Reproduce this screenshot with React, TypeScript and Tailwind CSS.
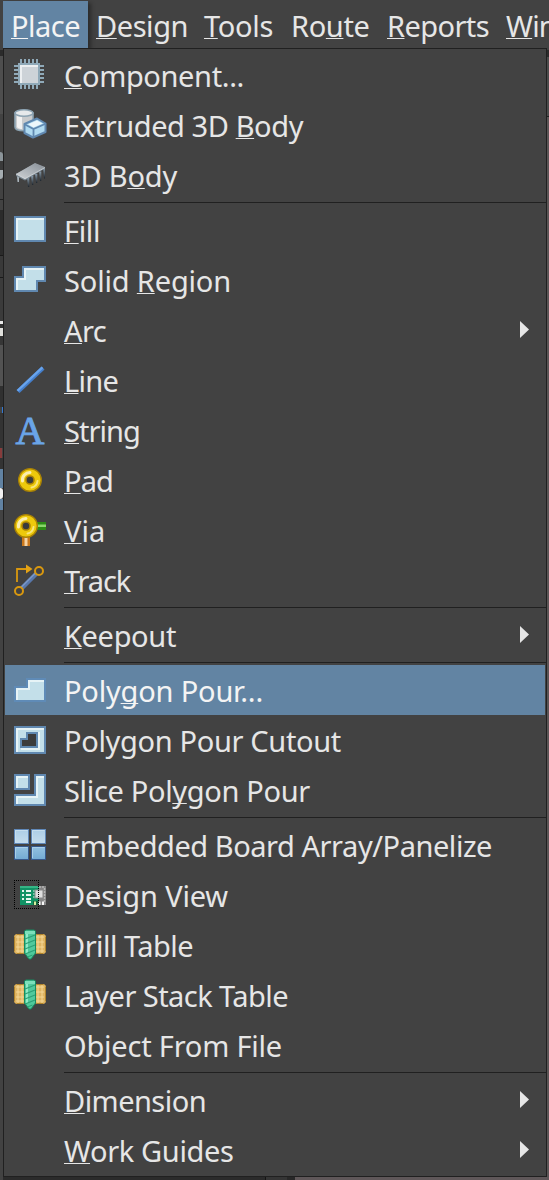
import { useLayoutEffect, useRef, useState, type ReactNode } from "react";

type LabelProps = { text: string; width: number; mnemonic?: number };

/** Menu caption with an underlined access key, tracked to its column width. */
function Label({ text, width, mnemonic }: LabelProps) {
  const ref = useRef<HTMLSpanElement>(null);
  const [spacing, setSpacing] = useState(0);
  useLayoutEffect(() => {
    if (ref.current) setSpacing((width - ref.current.getBoundingClientRect().width) / text.length);
  }, [text, width]);
  const key = mnemonic ?? -1;
  return (
    <span
      ref={ref}
      className="inline-block whitespace-pre font-['Noto_Sans',sans-serif] text-[29px] leading-[40px] font-[370]"
      style={{ letterSpacing: `${spacing}px` }}
    >
      {key < 0 ? (
        text
      ) : (
        <>
          {text.slice(0, key)}
          <span className="underline decoration-1 underline-offset-[1px] [text-decoration-skip-ink:none]">{text[key]}</span>
          {text.slice(key + 1)}
        </>
      )}
    </span>
  );
}

function Icon({ children }: { children?: ReactNode }) {
  return (
    <svg viewBox="0 0 32 32" className="size-8 shrink-0 overflow-visible">
      {children}
    </svg>
  );
}

const edge = "#6088b0";
const pale = "#c3dfe9";
const shine = "#e6f3f6";

function ComponentIcon() {
  return (
    <Icon>
      {[6, 10, 14, 18, 22].map((p) => (
        <g key={p} fill="#8fa9b8">
          <rect x={p} y="0" width="2" height="30" />
          <rect x="0" y={p} width="30" height="2" />
        </g>
      ))}
      <rect x="4" y="4" width="22" height="22" fill="#8fa9b8" />
      <rect x="6" y="6" width="18" height="18" fill="#cdd3d8" />
      <path d="M6 24V6h18v2H8v16z" fill="#eceff1" />
    </Icon>
  );
}

function ExtrudedIcon() {
  return (
    <Icon>
      <path d="M1 4v14c0 5 18 5 18 0V4z" fill="#c9cbcd" stroke="#8ca3b2" strokeWidth="1.6" />
      <path d="M3 7v11c1 1.500 3 2 5 2V8z" fill="#f0f0f0" />
      <ellipse cx="10" cy="4" rx="9" ry="3.300" fill="#e6e9eb" stroke="#8ca3b2" strokeWidth="1.600" />
      <path d="M10.500 15 23 9.500 31.500 14.500V23L19 28.500 10.500 24z" fill="#b0daf1" stroke={edge} strokeWidth="2" strokeLinejoin="round" />
      <path d="M14 15.300 23 11.500l5.500 3-9 4z" fill="#edf7fb" />
      <path d="M11 15.500 19.500 20 31 15M19.500 20v8" fill="none" stroke={edge} strokeWidth="1.800" />
    </Icon>
  );
}

function ChipIcon() {
  return (
    <Icon>
      <defs>
        <linearGradient id="chipTop" x1="0" y1="1" x2="1" y2="0">
          <stop offset="0" stopColor="#d0d3d6" />
          <stop offset="0.500" stopColor="#abb1b7" />
          <stop offset="1" stopColor="#858c94" />
        </linearGradient>
        <linearGradient id="chipLeg" x1="0" y1="0" x2="0" y2="1">
          <stop offset="0" stopColor="#8799a8" />
          <stop offset="1" stopColor="#1e262e" />
        </linearGradient>
      </defs>
      <path d="M3 17h2v6H3.500z" fill="#a9b4bc" />
      <path d="M13 19h2.300v9H14z" fill="url(#chipLeg)" />
      <path d="M17 17h2.300v9H18z" fill="url(#chipLeg)" />
      <path d="M21 15h2.300v9H22z" fill="url(#chipLeg)" />
      <path d="M25 12.500h2.300v9.500H26z" fill="url(#chipLeg)" />
      <path d="M29 9h2v10.500H30z" fill="url(#chipLeg)" />
      <path d="M2 15 21 4.500 31 8.500V9.500L11 21.500 2 17z" fill="#7a8792" />
      <path d="M2 15 21 4 31 8 11 20z" fill="url(#chipTop)" />
      <path d="M2 15 11 19.700 31 8.500" fill="none" stroke="#d5d9dc" strokeWidth="0.800" />
    </Icon>
  );
}

function FillIcon() {
  return (
    <Icon>
      <rect x="0" y="2" width="32" height="26" fill={edge} />
      <rect x="2" y="4" width="28" height="22" fill={pale} />
      <path d="M2 26V4h28v2H4v20z" fill={shine} />
    </Icon>
  );
}

function SolidIcon() {
  return (
    <Icon>
      <path d="M8 2h24v16h-8v10H0V12h8z" fill={edge} />
      <path d="M10 4h20v12h-8v10H2V14h8z" fill={pale} />
      <path d="M10 4h20v2H12v10H4v10H2V14h8z" fill={shine} />
    </Icon>
  );
}

function LineIcon() {
  return (
    <Icon>
      <path d="M4 27.500 29 4" stroke="#457fcb" strokeWidth="4.400" />
      <path d="M3.500 26.800 28.500 3.400" stroke="#69a4ec" strokeWidth="2.200" />
    </Icon>
  );
}

function StringIcon() {
  return (
    <Icon>
      <text
        x="16"
        y="29.500"
        textAnchor="middle"
        fill="#6aa5e8"
        stroke="#6aa5e8"
        strokeWidth="0.900"
        className="font-['Liberation_Serif',serif] text-[40px]"
      >
        A
      </text>
    </Icon>
  );
}

function Ring({ cx, cy }: { cx: number; cy: number }) {
  return (
    <>
      <circle cx={cx} cy={cy} r="11.300" fill="#edc90c" stroke="#a98205" strokeWidth="1.400" />
      <path d={`M${cx - 7.5} ${cy + 1}a7.500 7.500 0 0 1 7.500-8.500`} fill="none" stroke="#fbeeb0" strokeWidth="3" strokeLinecap="round" />
      <path d={`M${cx + 7.5} ${cy + 1}a7.500 7.500 0 0 1-6 6.500`} fill="none" stroke="#f8e67e" strokeWidth="2" strokeLinecap="round" />
      <circle cx={cx} cy={cy} r="4" fill="#393b3d" stroke="#a98205" strokeWidth="1.600" />
    </>
  );
}

function PadIcon() {
  return (
    <Icon>
      <Ring cx={16} cy={16} />
    </Icon>
  );
}

function ViaIcon() {
  return (
    <Icon>
      <rect x="22" y="8" width="10" height="8" fill="#2d8c16" />
      <rect x="22" y="10.500" width="10" height="2.500" fill="#8ad66b" />
      <rect x="8" y="22" width="8" height="10" fill="#c9771c" />
      <rect x="10.500" y="22" width="3" height="10" fill="#f6d3a4" />
      <Ring cx={12} cy={12} />
    </Icon>
  );
}

function TrackIcon() {
  return (
    <Icon>
      <path d="M7.500 24.500 22.500 9.500" stroke="#5877aa" strokeWidth="4.500" />
      <path d="M7 23.500 21.500 9" stroke="#7a98c6" strokeWidth="1.500" />
      <path d="M3 18V5h10" fill="none" stroke="#d9980f" strokeWidth="1.800" />
      <path d="M12 .5 18.500 5 12 9.500z" fill="#e3a215" />
      <circle cx="5" cy="27" r="4" fill="#424242" stroke="#d9980f" strokeWidth="2" />
      <circle cx="25" cy="7" r="4" fill="#424242" stroke="#d9980f" strokeWidth="2" />
    </Icon>
  );
}

function PolygonIcon() {
  return (
    <Icon>
      <path d="M12 4h20v24H0V12h12z" fill="#5f8bb7" />
      <path d="M14 6h16v20H2V14h12z" fill={pale} />
      <path d="M14 6h16v2H16v8H4v10H2V14h12z" fill={shine} />
    </Icon>
  );
}

function CutoutIcon() {
  return (
    <Icon>
      <rect x="0" y="2" width="32" height="28" fill={edge} />
      <rect x="2" y="4" width="28" height="24" fill={pale} />
      <path d="M2 28V4h28v2H4v22zM24 8h2v18H7v-2h17z" fill={shine} />
      <path d="M12 8h12v16H6V14h6z" fill={edge} />
      <path d="M14 10h8v12H8v-6h6z" fill="#3c3c3c" />
    </Icon>
  );
}

function SliceIcon() {
  return (
    <Icon>
      <path d="M0 0h16v16H0zM20 0h12v32H0V20h20z" fill={edge} />
      <path d="M2 2h12v12H2zM22 2h8v28H2v-8h20z" fill={pale} />
      <path d="M2 14V2h12v2H4v10zM22 2h8v2h-6v20H4v6H2v-8h20z" fill={shine} />
    </Icon>
  );
}

function ArrayIcon() {
  return (
    <Icon>
      <defs>
        <linearGradient id="boardTop" x1="0" y1="0" x2="0" y2="1">
          <stop offset="0" stopColor="#accee6" />
          <stop offset="1" stopColor="#c4dcec" />
        </linearGradient>
        <linearGradient id="boardBottom" x1="0" y1="0" x2="0" y2="1">
          <stop offset="0" stopColor="#93c1e0" />
          <stop offset="1" stopColor="#73abd3" />
        </linearGradient>
      </defs>
      {[0.5, 17.5].map((x) => (
        <g key={x}>
          <rect x={x} y="0.500" width="14" height="14" fill="url(#boardTop)" stroke="#6088b8" />
          <rect x={x} y="17.500" width="14" height="13" fill="url(#boardBottom)" stroke="#37598c" />
          <path d={`M${x + 1} 13V1.500h12`} fill="none" stroke="#c6deee" />
          <path d={`M${x + 1} 29V18.500h12`} fill="none" stroke="#a9cfe8" />
        </g>
      ))}
    </Icon>
  );
}

function ViewIcon() {
  return (
    <Icon>
      <rect x="6" y="7" width="19" height="19" fill="#119365" />
      <rect x="6" y="7" width="19" height="2" fill="#35b585" />
      <rect x="25" y="7" width="7" height="19" fill="#858585" />
      <path d="M25 8h6M30.500 9v14" stroke="#b5b5b5" strokeWidth="1.500" strokeDasharray="2 1" />
      <path d="M8 11h2v2H8zm0 4h2v2H8zm0 4h2v2H8zM12 11h5v2h-5zm0 4h5v2h-5zm0 4h5v2h-5zm0 3h5v2h-5z" fill="#e4f5ed" />
      <rect x="21" y="11" width="8" height="8" fill="#dedede" stroke="#888" />
      <path d="M19 12h1.500m-1.500 3h1.500m-1.500 3h1.500" stroke="#d8efe5" />
      <rect x="19" y="22" width="6" height="4" fill="#13673d" />
      <path d="M20 22.500h2V26h-2z" fill="#d6efa0" />
      <path d="M24.500 22.500h2V26h-2zm3.500 0h2V26h-2z" fill="#f6f6f6" />
      <path
        d="M0 1.500h25M0 29.500h25M0.500 1v29M24.500 1v29"
        fill="none"
        stroke="#000"
        strokeDasharray="1 1"
        shapeRendering="crispEdges"
      />
    </Icon>
  );
}

function DrillIcon() {
  return (
    <Icon>
      <path d="M2 5h7l2 1v18l-2 1H2l-2-2V7zM23 5h7l2 2v16l-2 2h-7l-2-1V6z" fill="#dfb461" />
      <path d="M2 8h8m-8 5h8m-8 5h8m-8 4h8M4 6v18M8 6v18M22 8h8m-8 5h8m-8 5h8m-8 4h8M24 6v18M28 6v18" stroke="#f3d797" />
      <path d="M2.500 5.500h7M2.500 24.500h7M.5 7.500v15M22.500 5.500h7M22.500 24.500h7M31.500 7.500v15" stroke="#b0842c" />
      <path d="M10.500 2 12 1h8l1.500 1v22L17 30h-2l-4.500-6z" fill="#50c99c" stroke="#158c61" />
      <path d="M13 2v22" stroke="#92e9c7" strokeWidth="2" />
      <path d="M11 10 21 6M11 15l10-4M11 20l10-4M11 25l10-4M13.500 28l5-2" stroke="#2b9f74" strokeWidth="1.100" />
      <path d="M11 2h10v3H11z" fill="#7de0bb" />
    </Icon>
  );
}

type Entry = LabelProps & { icon?: ReactNode; submenu?: boolean; active?: boolean };

const groups: Entry[][] = [
  [
    { text: "Component...", width: 180, mnemonic: 0, icon: <ComponentIcon /> },
    { text: "Extruded 3D Body", width: 239, mnemonic: 12, icon: <ExtrudedIcon /> },
    { text: "3D Body", width: 113, mnemonic: 4, icon: <ChipIcon /> },
  ],
  [
    { text: "Fill", width: 36, mnemonic: 0, icon: <FillIcon /> },
    { text: "Solid Region", width: 167, mnemonic: 6, icon: <SolidIcon /> },
    { text: "Arc", width: 42, mnemonic: 0, submenu: true },
    { text: "Line", width: 54, mnemonic: 0, icon: <LineIcon /> },
    { text: "String", width: 76, mnemonic: 0, icon: <StringIcon /> },
    { text: "Pad", width: 49, mnemonic: 0, icon: <PadIcon /> },
    { text: "Via", width: 41.5, mnemonic: 0, icon: <ViaIcon /> },
    { text: "Track", width: 66, mnemonic: 0, icon: <TrackIcon /> },
  ],
  [{ text: "Keepout", width: 112, mnemonic: 0, submenu: true }],
  [
    { text: "Polygon Pour...", width: 199, mnemonic: 4, icon: <PolygonIcon />, active: true },
    { text: "Polygon Pour Cutout", width: 277, icon: <CutoutIcon /> },
    { text: "Slice Polygon Pour", width: 246, mnemonic: 9, icon: <SliceIcon /> },
  ],
  [
    { text: "Embedded Board Array/Panelize", width: 428, icon: <ArrayIcon /> },
    { text: "Design View", width: 164, icon: <ViewIcon /> },
    { text: "Drill Table", width: 129, icon: <DrillIcon /> },
    { text: "Layer Stack Table", width: 224, icon: <DrillIcon /> },
    { text: "Object From File", width: 218 },
  ],
  [
    { text: "Dimension", width: 142, mnemonic: 0, submenu: true },
    { text: "Work Guides", width: 169.5, mnemonic: 0, submenu: true },
  ],
];

function Row({ icon, submenu, active, ...label }: Entry) {
  return (
    <div className={active ? "mx-px flex h-[50px] items-start bg-[#6284a3] pl-[9px] text-[#f4f4f4]" : "mx-px flex h-[50px] items-start pl-[9px]"}>
      <div className="mt-[9px] mr-[18px] size-8 shrink-0">{icon}</div>
      <div className="mt-[6px] grow">
        <Label {...label} />
      </div>
      {submenu && (
        <svg viewBox="0 0 9 17" className="mt-4 mr-4 h-[17px] w-[9px] shrink-0">
          <path d="M0 0 9 8.500 0 17z" fill="#e6e6e6" />
        </svg>
      )}
    </div>
  );
}

const leftStrip: string[] = [
  "h-[50px] bg-[#424242]",
  "h-[6px] bg-[#2b2b2b]",
  "h-[58px] bg-[#4e4e4e]",
  "h-[38px] bg-[#424242]",
  "h-[9px] bg-[#8b9499] rounded-tr-full",
  "h-[9px] bg-[#3a3a3a]",
  "h-[9px] bg-[#a5adb1] rounded-br-full",
  "h-[20px] bg-[#424242]",
  "h-px bg-[#202020]",
  "h-[10px] bg-[#424242]",
  "h-[45px] bg-[#2b2b2b]",
  "h-px bg-[#1a1a1a]",
  "h-[21px] bg-[#393939]",
  "h-px bg-[#1a1a1a]",
  "h-[43px] bg-[#3b3b3b]",
  "h-[3px] bg-[#e8e8e8]",
  "h-[4px] bg-[#333333]",
  "h-[8px] bg-[#e0e0dc]",
  "h-[9px] bg-[#363636]",
  "h-[41px] bg-[#525252]",
  "h-[21px] bg-[#303030]",
  "h-[6px] w-px self-end bg-[#3478d0]",
  "h-[35px] bg-[#333333]",
  "h-[10px] w-[2px] bg-[#873c3c]",
  "h-[11px] bg-[#333333]",
  "h-[19px] bg-[#6182a2]",
  "h-[11px] rounded-r-full bg-[#f0f0f0]",
  "h-[11px] bg-[#6182a2]",
  "grow bg-[#424242]",
];

const menus: (LabelProps & { box: string })[] = [
  { text: "Place", width: 69, mnemonic: 0, box: "w-[85px] pl-2 mt-px h-[47px] pt-[5px] bg-[#6284a3] text-[#f4f4f4] shadow-[3px_2px_4px_rgba(0,0,0,0.35)]" },
  { text: "Design", width: 92, mnemonic: 0, box: "w-[108px] pl-2 pt-[6px]" },
  { text: "Tools", width: 69, mnemonic: 0, box: "w-[87px] pl-2 pt-[6px]" },
  { text: "Route", width: 78.5, mnemonic: 2, box: "w-[96px] pl-2 pt-[6px]" },
  { text: "Reports", width: 102, mnemonic: 0, box: "w-[119px] pl-2 pt-[6px]" },
  { text: "Window", width: 105, mnemonic: 0, box: "w-[120px] pl-2 pt-[6px]" },
];

export default function App() {
  return (
    <div className="flex h-[1180px] w-[549px] overflow-hidden bg-[#424242] text-[#e6e6e6]">
      <div className="flex w-[3px] shrink-0 flex-col">
        {leftStrip.map((c, i) => (
          <div key={i} className={c} />
        ))}
      </div>
      <div className="flex w-[546px] shrink-0 flex-col">
        <div className="flex h-12 w-full shrink-0 items-start overflow-hidden">
          {menus.map(({ box, ...m }) => (
            <div key={m.text} className={`shrink-0 ${box}`}>
              <Label {...m} />
            </div>
          ))}
        </div>
        <div className="flex h-[1129px] shrink-0">
          <div className="w-[544px] shrink-0 border border-[#202020] bg-[#424242] pt-px">
            {groups.map((rows, g) => (
              <div key={g}>
                {g > 0 && (
                  <div className="h-[5px] pt-[2px] pl-[60px]">
                    <div className="h-px bg-[#202020]" />
                  </div>
                )}
                {rows.map((r) => (
                  <Row key={r.text} {...r} />
                ))}
              </div>
            ))}
          </div>
          <div className="flex w-[2px] flex-col">
            <div className="h-[2px] bg-[#424242]" />
            <div className="h-[7px] bg-[#2b2b2b]" />
            <div className="h-[59px] bg-[#4b4b4b]" />
            <div className="h-px bg-[#202020]" />
            <div className="grow bg-[#5b5556]" />
          </div>
        </div>
        <div className="flex h-[3px] shrink-0">
          <div className="w-[262px] bg-[#2b2b2b]" />
          <div className="w-px bg-[#151515]" />
          <div className="w-[21px] bg-[#353535]" />
          <div className="w-[8px] bg-[#282828]" />
          <div className="grow bg-[#5f5759]" />
        </div>
      </div>
    </div>
  );
}
